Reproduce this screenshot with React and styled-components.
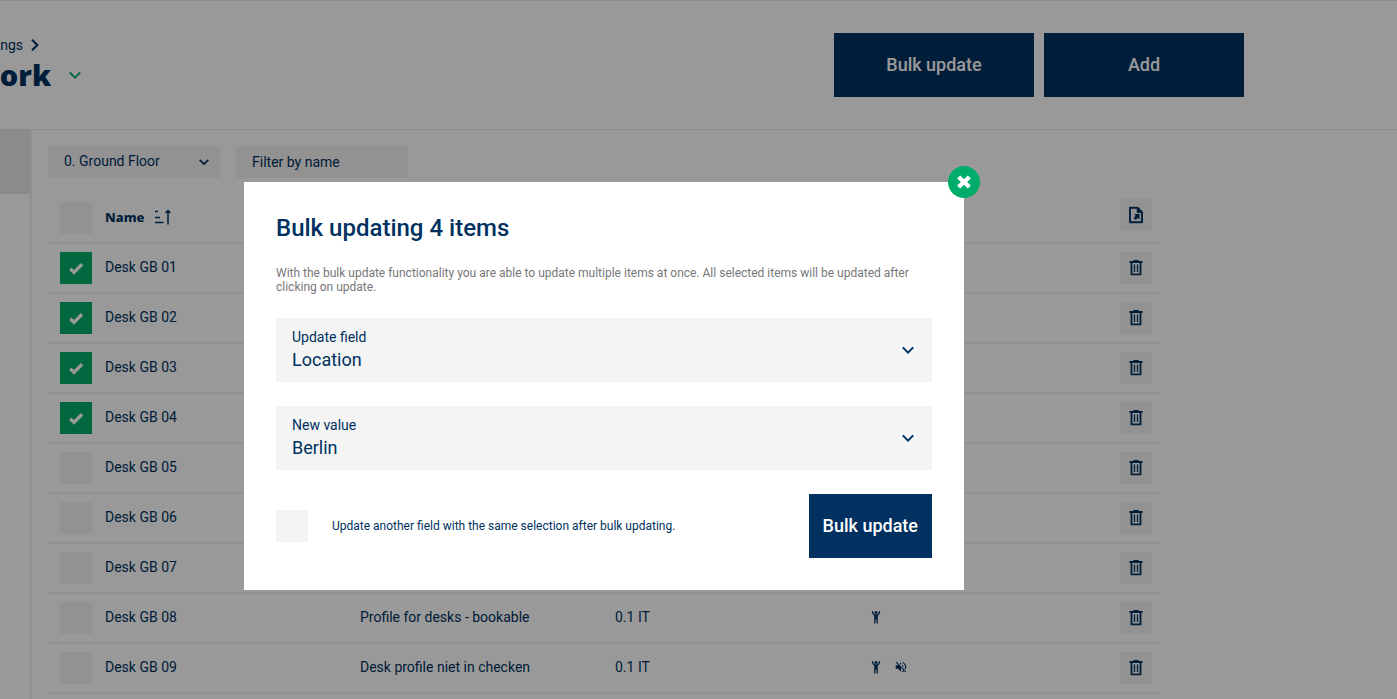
import React, { useState } from "react";
import styled, { createGlobalStyle } from "styled-components";
import { MdVolumeOff } from "react-icons/md";

const palette = {
  white: "#ffffff",
  navy: "#003160",
  green: "#00ac69",
  gray: "#f4f4f4",
  line: "#f0f0f0",
  active: "#e8e8e8",
  text: "#777777",
};

const desks = [
  { name: "Desk GB 01" },
  { name: "Desk GB 02" },
  { name: "Desk GB 03" },
  { name: "Desk GB 04" },
  { name: "Desk GB 05" },
  { name: "Desk GB 06" },
  { name: "Desk GB 07" },
  { name: "Desk GB 08", profile: "Profile for desks - bookable", location: "0.1 IT", standing: true },
  { name: "Desk GB 09", profile: "Desk profile niet in checken", location: "0.1 IT", standing: true, silent: true },
];

const Chevron = ({ size = 12 }) => (
  <svg width={size} height={size} viewBox="0 0 12 12" fill="none" stroke="currentColor" strokeWidth="2">
    <path d="M0.8 3.4 6 8.6l5.2-5.2" />
  </svg>
);

const ChevronRight = () => (
  <svg width="8" height="12" viewBox="0 0 8 12" fill="none" stroke="currentColor" strokeWidth="2">
    <path d="M1 0.8 6.4 6 1 11.2" />
  </svg>
);

const CheckIcon = () => (
  <svg width="16" height="14" viewBox="0 0 16 14" fill="none" stroke="currentColor" strokeWidth="3.4">
    <path d="M2.2 7.8 6 11.4 14 3.2" />
  </svg>
);

const CloseIcon = () => (
  <svg width="16" height="16" viewBox="0 0 16 16" fill="none" stroke="currentColor" strokeWidth="4.4">
    <path d="M2.6 3 13.4 13M13.4 3 2.6 13" />
  </svg>
);

const SortIcon = () => (
  <svg width="18" height="16" viewBox="0 0 18 16" fill="none" stroke="currentColor" strokeWidth="1.5">
    <path d="M1 2.5h3M1 8.5h5M1 13.5h8.5M14 15.5V2M11.5 4 14 1.5 16.5 4" />
  </svg>
);

const TrashIcon = () => (
  <svg width="14" height="16" viewBox="0 0 14 16" fill="none" stroke="currentColor">
    <path d="M0.5 2h13M4.5 1h5" strokeWidth="2" />
    <path d="M2.5 2v12.3h9V2" strokeWidth="1.8" />
    <path d="M5.5 4.5v7.5M8.5 4.5v7.5" strokeWidth="1.3" />
  </svg>
);

const ExportIcon = () => (
  <svg width="14" height="18" viewBox="0 0 14 18" fill="none" stroke="currentColor">
    <path d="M1 1.8h7.5L13 6.2v10H1z" strokeWidth="1.9" strokeLinejoin="round" />
    <path d="M8 1.2v5.6h5.6z" fill="currentColor" strokeWidth="0.5" />
    <path d="M5 8h5.5v5.5L8.8 12 6.6 14 4.5 12l2.2-2.2z" fill="currentColor" stroke="none" />
  </svg>
);

const PersonIcon = () => (
  <svg width="12" height="14" viewBox="0 0 12 14" fill="currentColor">
    <circle cx="6" cy="2.4" r="1.5" />
    <path d="M4.2 4.6h3.6v8.9H6.5V9.4h-1v4.1H4.2z" />
    <path d="M2.4 1.2 3 3.6 4.9 5.4h2.2L9 3.6l.6-2.4" fill="none" stroke="currentColor" strokeWidth="1.3" />
  </svg>
);

const Checkbox = ({ label, checked, onChange }) => (
  <CheckWrap>
    <CheckInput type="checkbox" aria-label={label} checked={checked} onChange={onChange} />
    {checked && <CheckIcon />}
  </CheckWrap>
);

const App = () => {
  const [selected, setSelected] = useState([0, 1, 2, 3]);
  const [again, setAgain] = useState(false);
  const [open, setOpen] = useState(true);

  const toggle = (i) =>
    setSelected(selected.includes(i) ? selected.filter((s) => s !== i) : [...selected, i]);

  return (
    <>
      <GlobalStyle />
      <Page>
        <Header>
          <Heading>
            <Breadcrumb href="#">
              Settings <ChevronRight />
            </Breadcrumb>
            <TitleRow>
              <PageTitle>Work</PageTitle>
              <Toggle aria-label="Switch section">
                <Chevron />
              </Toggle>
            </TitleRow>
          </Heading>
          <Actions>
            <Button $width="200px" onClick={() => setOpen(true)}>Bulk update</Button>
            <Button $width="200px">Add</Button>
          </Actions>
        </Header>
        <Body>
          <Sidebar>
            <SidebarItem />
          </Sidebar>
          <Content>
            <Filters>
              <FilterBox>
                <FilterSelect aria-label="Floor">
                  <option>0. Ground Floor</option>
                </FilterSelect>
                <Chevron size={10} />
              </FilterBox>
              <FilterBox>
                <FilterInput placeholder="Filter by name" aria-label="Filter by name" />
              </FilterBox>
            </Filters>
            <Table>
              <colgroup>
                <Col $width="57px" />
                <Col $width="255px" />
                <Col $width="255px" />
                <Col $width="255px" />
                <Col />
                <Col $width="40px" />
              </colgroup>
              <thead>
                <tr>
                  <Cell $left="12px">
                    <Checkbox label="Select all" checked={false} onChange={() => setSelected(desks.map((d, i) => i))} />
                  </Cell>
                  <HeadCell colSpan={4}>
                    <SortLabel>
                      Name <SortIcon />
                    </SortLabel>
                  </HeadCell>
                  <Cell $bottom="6px">
                    <IconButton aria-label="Export">
                      <ExportIcon />
                    </IconButton>
                  </Cell>
                </tr>
              </thead>
              <tbody>
                {desks.map((desk, i) => (
                  <tr key={desk.name}>
                    <Cell $left="12px">
                      <Checkbox label={desk.name} checked={selected.includes(i)} onChange={() => toggle(i)} />
                    </Cell>
                    <Cell $bottom="2px">{desk.name}</Cell>
                    <Cell $bottom="2px">{desk.profile}</Cell>
                    <Cell $bottom="2px">{desk.location}</Cell>
                    <Cell $bottom="2px">
                      <Features>
                        {desk.standing && <PersonIcon />}
                        {desk.silent && <MdVolumeOff size={14} />}
                      </Features>
                    </Cell>
                    <Cell>
                      <IconButton aria-label={`Delete ${desk.name}`}>
                        <TrashIcon />
                      </IconButton>
                    </Cell>
                  </tr>
                ))}
              </tbody>
            </Table>
          </Content>
        </Body>
      </Page>
      {open && (
        <Overlay>
          <Modal role="dialog" aria-labelledby="bulk-title">
            <Close aria-label="Close" onClick={() => setOpen(false)}>
              <CloseIcon />
            </Close>
            <ModalTitle id="bulk-title">Bulk updating {selected.length} items</ModalTitle>
            <Description>
              With the bulk update functionality you are able to update multiple items at once. All selected
              items will be updated after clicking on update.
            </Description>
            <Field>
              <FieldText>
                <FieldLabel htmlFor="field">Update field</FieldLabel>
                <FieldSelect id="field">
                  <option>Location</option>
                </FieldSelect>
              </FieldText>
              <Chevron />
            </Field>
            <Field>
              <FieldText>
                <FieldLabel htmlFor="value">New value</FieldLabel>
                <FieldSelect id="value">
                  <option>Berlin</option>
                </FieldSelect>
              </FieldText>
              <Chevron />
            </Field>
            <ModalFooter>
              <Again>
                <Checkbox checked={again} onChange={() => setAgain(!again)} />
                Update another field with the same selection after bulk updating.
              </Again>
              <Button>Bulk update</Button>
            </ModalFooter>
          </Modal>
        </Overlay>
      )}
    </>
  );
};

const GlobalStyle = createGlobalStyle`
  * {
    box-sizing: border-box;
  }
  body {
    margin: 0;
    font-family: Roboto, "Liberation Sans", sans-serif;
    font-size: 14px;
    color: ${palette.navy};
    background: ${palette.white};
  }
  button, input, select {
    margin: 0;
    padding: 0;
    border: 0;
    border-radius: 0;
    font: inherit;
    color: inherit;
    background: none;
    outline: none;
  }
  button {
    cursor: pointer;
  }
  svg {
    display: block;
    flex: none;
  }
`;

const Page = styled.div`
  display: flex;
  flex-direction: column;
  min-height: 100vh;
`;

const Header = styled.header`
  display: flex;
  justify-content: space-between;
  padding: 32px 153px 32px 0;
  border-top: 1px solid ${palette.active};
  border-bottom: 1px solid ${palette.active};
`;

const Heading = styled.div`
  display: flex;
  flex-direction: column;
  align-items: flex-end;
  width: 81px;
  overflow: hidden;
`;

const Breadcrumb = styled.a`
  display: flex;
  align-items: center;
  gap: 8px;
  margin-right: 42px;
  line-height: 24px;
  color: inherit;
  text-decoration: none;
`;

const TitleRow = styled.div`
  display: flex;
  align-items: center;
  gap: 18px;
`;

const PageTitle = styled.h1`
  margin: 0;
  font-family: "Noto Sans", sans-serif;
  font-size: 29px;
  font-weight: 900;
  line-height: 36px;
`;

const Toggle = styled.button`
  color: ${palette.green};
`;

const Actions = styled.div`
  display: flex;
  gap: 10px;
`;

const Button = styled.button`
  width: ${({ $width }) => $width || "auto"};
  height: 64px;
  padding: 0 14px 2px;
  font-size: 18px;
  font-weight: 500;
  color: ${palette.white};
  background: ${palette.navy};
`;

const Body = styled.div`
  display: flex;
  flex: 1;
`;

const Sidebar = styled.aside`
  width: 32px;
  border-right: 2px solid ${palette.line};
`;

const SidebarItem = styled.div`
  height: 64px;
  background: ${palette.active};
`;

const Content = styled.main`
  flex: 1;
  padding: 16px 16px 0;
`;

const Filters = styled.div`
  display: flex;
  gap: 16px;
  margin-bottom: 16px;
`;

const FilterBox = styled.div`
  display: flex;
  align-items: center;
  width: 172px;
  height: 32px;
  padding: 0 11px 0 16px;
  background: ${palette.gray};
`;

const FilterSelect = styled.select`
  flex: 1;
  padding-bottom: 2px;
  appearance: none;
`;

const FilterInput = styled.input`
  width: 100%;

  &::placeholder {
    color: ${palette.navy};
    opacity: 1;
  }
`;

const Table = styled.table`
  width: 100%;
  max-width: 1112px;
  table-layout: fixed;
  border-spacing: 0;
`;

const Col = styled.col`
  width: ${({ $width }) => $width || "auto"};
`;

const Cell = styled.td`
  height: 50px;
  padding: 0;
  padding-left: ${({ $left }) => $left || "0"};
  padding-bottom: ${({ $bottom }) => $bottom || "0"};
  border-bottom: 2px solid ${palette.line};
`;

const HeadCell = styled.th`
  padding: 0 0 2px;
  text-align: left;
  font-family: "Noto Sans", sans-serif;
  font-size: 13px;
  font-weight: 800;
  border-bottom: 2px solid ${palette.line};
`;

const SortLabel = styled.div`
  display: flex;
  align-items: center;
  gap: 10px;
`;

const CheckWrap = styled.span`
  display: grid;
  place-items: center;
  width: 32px;
  height: 32px;
  color: ${palette.white};

  > * {
    grid-area: 1 / 1;
  }

  svg {
    pointer-events: none;
  }
`;

const CheckInput = styled.input`
  appearance: none;
  width: 32px;
  height: 32px;
  background: ${palette.gray};

  &:checked {
    background: ${palette.green};
  }
`;

const Features = styled.div`
  display: flex;
  align-items: center;
  gap: 12px;
`;

const IconButton = styled.button`
  display: grid;
  place-items: center;
  width: 32px;
  height: 32px;
  background: ${palette.gray};
`;

const Overlay = styled.div`
  position: fixed;
  inset: 0;
  display: flex;
  justify-content: center;
  align-items: flex-start;
  padding: 182px 189px 0 0;
  background: rgba(0, 0, 0, 0.4);
`;

const Modal = styled.section`
  position: relative;
  display: flex;
  flex-direction: column;
  gap: 24px;
  width: 720px;
  padding: 32px;
  background: ${palette.white};
`;

const Close = styled.button`
  position: absolute;
  top: -16px;
  right: -16px;
  display: grid;
  place-items: center;
  width: 32px;
  height: 32px;
  border-radius: 50%;
  color: ${palette.white};
  background: ${palette.green};
`;

const ModalTitle = styled.h2`
  margin: 0;
  font-size: 24px;
  font-weight: 500;
  line-height: 28px;
`;

const Description = styled.p`
  margin: 0;
  font-size: 12px;
  line-height: 14px;
  color: ${palette.text};
`;

const Field = styled.div`
  display: flex;
  align-items: center;
  height: 64px;
  padding: 0 18px 0 16px;
  background: ${palette.gray};
`;

const FieldText = styled.div`
  display: flex;
  flex: 1;
  flex-direction: column;
  padding-bottom: 2px;
`;

const FieldLabel = styled.label`
  line-height: 20px;
`;

const FieldSelect = styled.select`
  appearance: none;
  height: 24px;
  font-size: 18px;
`;

const ModalFooter = styled.div`
  display: flex;
  align-items: center;
  justify-content: space-between;
`;

const Again = styled.label`
  display: flex;
  align-items: center;
  gap: 24px;
  font-size: 12px;
`;

export default App;
